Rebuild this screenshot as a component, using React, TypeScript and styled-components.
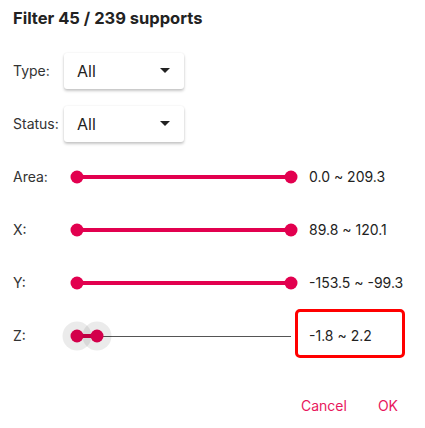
import React from "react";
import styled, { createGlobalStyle } from "styled-components";

const Global = createGlobalStyle`
  html, body { margin: 0; padding: 0; background: #fff; }
  body { font-family: Inter, "Noto Sans", sans-serif; color: #222; }
`;

const ACCENT = "#e2004f";

const Dialog = styled.div`
  width: 425px;
  height: 428px;
  box-sizing: border-box;
  padding: 0 13px;
  display: flex;
  flex-direction: column;
`;

const Title = styled.h2`
  margin: 0;
  height: 44px;
  box-sizing: border-box;
  padding-top: 8px;
  font-size: 16.5px;
  line-height: 20px;
  font-weight: 700;
  color: #222;
`;

const Form = styled.div`
  display: grid;
  grid-template-columns: 51px 240px 1fr;
  grid-auto-rows: 53px;
  align-items: center;
`;

const Label = styled.div`
  font-size: 14px;
  color: #333;
`;

const Select = styled.div`
  grid-column: span 2;
  justify-self: start;
  width: 120px;
  height: 36px;
  box-sizing: border-box;
  padding: 0 14px 0 13px;
  display: flex;
  align-items: center;
  justify-content: space-between;
  background: #fff;
  border-radius: 3px;
  box-shadow: 0 2px 3px rgba(0, 0, 0, 0.22), 0 0 2px rgba(0, 0, 0, 0.08);
  font-size: 16px;
  color: #222;
`;

const Caret = styled.span`
  width: 0;
  height: 0;
  border-left: 5px solid transparent;
  border-right: 5px solid transparent;
  border-top: 5px solid #222;
`;

const SliderBox = styled.div`
  position: relative;
  height: 30px;
  margin: 0 13px;
`;

const Rail = styled.div`
  position: absolute;
  top: 15px;
  left: 0;
  right: 0;
  height: 1px;
  background: #555;
`;

const Track = styled.div`
  position: absolute;
  top: 13.5px;
  height: 4px;
  background: ${ACCENT};
`;

const Thumb = styled.div<{ $active?: boolean }>`
  position: absolute;
  top: 50%;
  width: 13px;
  height: 13px;
  border-radius: 50%;
  transform: translate(-50%, -50%);
  background: ${(p) => (p.$active ? "#d3004b" : ACCENT)};
  box-shadow: ${(p) => (p.$active ? "0 0 0 8px rgba(0, 0, 0, 0.08)" : "none")};
`;

const Value = styled.div`
  position: relative;
  padding-left: 5px;
  font-size: 14px;
  color: #222;
  white-space: nowrap;
`;

const Highlight = styled.div`
  position: absolute;
  left: -9px;
  top: -18px;
  width: 110px;
  height: 49px;
  box-sizing: border-box;
  border: 3px solid #ff0000;
  border-radius: 5px;
`;

const Actions = styled.div`
  margin-top: auto;
  height: 42px;
  display: flex;
  justify-content: flex-end;
  align-items: center;
  gap: 31px;
  padding: 0 14px 2px 0;
`;

const TextButton = styled.button`
  border: none;
  background: none;
  padding: 0;
  font-family: inherit;
  font-size: 14px;
  color: #e8175d;
  cursor: pointer;
`;

type Range = {
  label: string;
  value: string;
  lo: number;
  hi: number;
  active?: boolean;
};

const ranges: Range[] = [
  { label: "Area:", value: "0.0 ~ 209.3", lo: 0, hi: 1 },
  { label: "X:", value: "89.8 ~ 120.1", lo: 0, hi: 1 },
  { label: "Y:", value: "-153.5 ~ -99.3", lo: 0, hi: 1 },
  { label: "Z:", value: "-1.8 ~ 2.2", lo: 0, hi: 0.0935, active: true },
];

const RangeSlider = ({ lo, hi, active }: Range) => (
  <SliderBox>
    {active && <Rail />}
    <Track style={{ left: `${lo * 100}%`, width: `${(hi - lo) * 100}%` }} />
    <Thumb $active={active} style={{ left: `${lo * 100}%` }} />
    <Thumb $active={active} style={{ left: `${hi * 100}%` }} />
  </SliderBox>
);

export default function App() {
  return (
    <Dialog>
      <Global />
      <Title>Filter 45 / 239 supports</Title>
      <Form>
        <Label>Type:</Label>
        <Select>
          All <Caret />
        </Select>
        <Label>Status:</Label>
        <Select>
          All <Caret />
        </Select>
        {ranges.map((r) => (
          <React.Fragment key={r.label}>
            <Label>{r.label}</Label>
            <RangeSlider {...r} />
            <Value>
              {r.value}
              {r.active && <Highlight />}
            </Value>
          </React.Fragment>
        ))}
      </Form>
      <Actions>
        <TextButton>Cancel</TextButton>
        <TextButton>OK</TextButton>
      </Actions>
    </Dialog>
  );
}
